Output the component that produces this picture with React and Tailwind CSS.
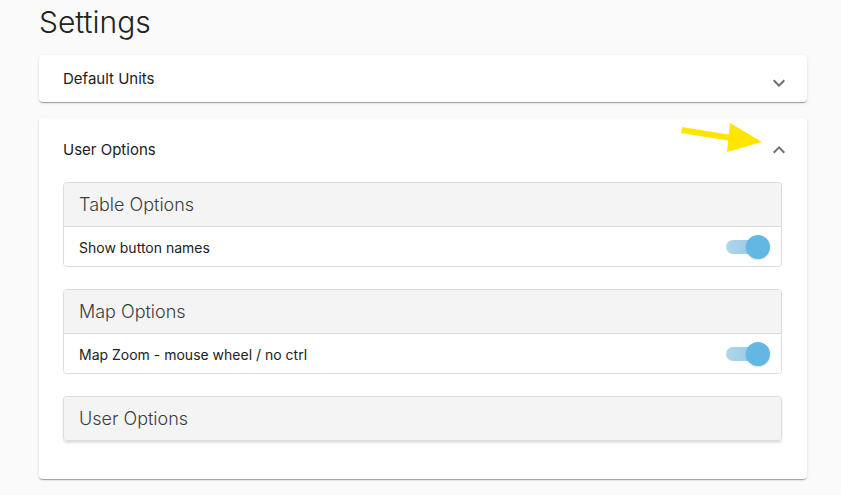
import React, { useState } from "react";

const paperShadow =
  "shadow-[0_2px_1px_-1px_rgba(0,0,0,0.2),0_1px_1px_0_rgba(0,0,0,0.14),0_1px_3px_0_rgba(0,0,0,0.12)]";

const Chevron = ({ up = false }) => (
  <svg width="24" height="24" viewBox="0 0 24 24" className="text-[#6f6f6f]">
    <path
      d={up ? "M7.41 15.41 12 10.83l4.59 4.58L18 14l-6-6-6 6z" : "M16.59 8.59 12 13.17 7.41 8.59 6 10l6 6 6-6z"}
      fill="currentColor"
    />
  </svg>
);

const Toggle = ({ on, onChange }) => (
  <button onClick={onChange} className="relative w-[44px] h-[24px] mr-[11px] flex items-center">
    <span className="absolute left-0 w-[36px] h-[14px] rounded-full bg-gradient-to-r from-[#b0d6ea] to-[#8fc7e6]" />
    <span
      className={`absolute w-[24px] h-[24px] rounded-full bg-[#63b7e5] shadow-[0_1px_2px_rgba(0,0,0,0.15)] ${
        on ? "left-[20px]" : "left-0"
      }`}
    />
  </button>
);

const OptionGroup = ({ title, children, shadow = false }) => (
  <div
    className={`border border-[#dcdcdc] rounded-[4px] overflow-hidden ${
      shadow ? "shadow-[0_2px_2px_rgba(0,0,0,0.12)]" : ""
    }`}
  >
    <div className="h-[43px] bg-[#f4f4f4] flex items-center pl-[15px] text-[18px] font-light text-[#3d3d3d]">
      {title}
    </div>
    {children}
  </div>
);

const OptionRow = ({ label }) => {
  const [on, setOn] = useState(true);
  return (
    <div className="h-[40px] border-t border-[#dcdcdc] bg-white flex items-center justify-between pl-[15px] pt-[1px]">
      <span className="text-[14px] text-[#222]">{label}</span>
      <Toggle on={on} onChange={() => setOn(!on)} />
    </div>
  );
};

export default function App() {
  const [unitsOpen, setUnitsOpen] = useState(false);

  return (
    <div
      className="relative min-h-screen bg-[#fafafa] pl-[39px] pr-[34px] pb-6"
      style={{ fontFamily: "Inter, 'Noto Sans', sans-serif" }}
    >
      <h1 className="pt-[4px] text-[30px] leading-[36px] font-light text-[#222]">Settings</h1>

      <div className={`mt-[15px] bg-white rounded-[4px] ${paperShadow}`}>
        <button
          onClick={() => setUnitsOpen(!unitsOpen)}
          className="w-full h-[47px] flex items-center justify-between pl-6 pr-4 pt-[1px]"
        >
          <span className="text-[15px] text-[#222]">Default Units</span>
          <span className="mt-[7px]">
            <Chevron up={unitsOpen} />
          </span>
        </button>
      </div>

      <div className={`mt-[16px] bg-white rounded-[4px] ${paperShadow}`}>
        <div className="h-[64px] flex items-center justify-between pl-6 pr-4">
          <span className="text-[15px] text-[#222]">User Options</span>
          <Chevron up />
        </div>
        <div className="pl-6 pr-[25px] pb-[38px] flex flex-col gap-[22px]">
          <OptionGroup title="Table Options">
            <OptionRow label="Show button names" />
          </OptionGroup>
          <OptionGroup title="Map Options">
            <OptionRow label="Map Zoom - mouse wheel / no ctrl" />
          </OptionGroup>
          <OptionGroup title="User Options" shadow />
        </div>
      </div>

      <svg
        className="absolute left-[680px] top-[120px] pointer-events-none"
        width="85"
        height="35"
        viewBox="0 0 85 35"
      >
        <polygon points="2,7 52,15 51,21 1,13" fill="#ffe500" />
        <polygon points="50,3 82,22 47,32" fill="#ffe500" />
      </svg>
    </div>
  );
}
